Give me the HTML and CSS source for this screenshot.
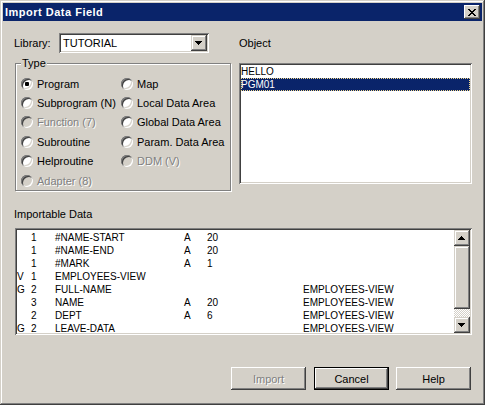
FILE: index.html
```html
<!DOCTYPE html>
<html>
<head>
<meta charset="utf-8">
<title>Import Data Field</title>
<link rel="stylesheet" href="styles.css">
</head>
<body>
<div class="window">
  <div class="titlebar">
    <span class="title">Import Data Field</span>
    <span class="close-btn raised">
      <svg width="8" height="7" viewBox="0 0 8 7"><path d="M0 0h2v1H0zM6 0h2v1H6zM1 1h2v1H1zM5 1h2v1H5zM2 2h4v1H2zM3 3h2v1H3zM2 4h4v1H2zM1 5h2v1H1zM5 5h2v1H5zM0 6h2v1H0zM6 6h2v1H6z" fill="#000"/></svg>
    </span>
  </div>
  <div class="content">
    <div class="top">
      <div class="left">
        <div class="lib-row">
          <span class="lib-label">Library:</span>
          <div class="combo sunken">
            <span class="combo-text">TUTORIAL</span>
            <span class="combo-btn sb-btn">
              <svg width="7" height="4" viewBox="0 0 7 4"><path d="M0 0h7v1H6v1H5v1H4v1H3V3H2V2H1V1H0z" fill="#000"/></svg>
            </span>
          </div>
        </div>
        <div class="group">
          <span class="group-label">Type</span>
          <div class="radios">
            <div class="radio-item"><span class="radio checked"></span>Program</div>
            <div class="radio-item"><span class="radio"></span>Subprogram (N)</div>
            <div class="radio-item disabled"><span class="radio"></span>Function (7)</div>
            <div class="radio-item"><span class="radio"></span>Subroutine</div>
            <div class="radio-item"><span class="radio"></span>Helproutine</div>
            <div class="radio-item disabled"><span class="radio"></span>Adapter (8)</div>
            <div class="radio-item"><span class="radio"></span>Map</div>
            <div class="radio-item"><span class="radio"></span>Local Data Area</div>
            <div class="radio-item"><span class="radio"></span>Global Data Area</div>
            <div class="radio-item"><span class="radio"></span>Param. Data Area</div>
            <div class="radio-item disabled"><span class="radio"></span>DDM (V)</div>
          </div>
        </div>
      </div>
      <div class="right">
        <div class="obj-label">Object</div>
        <div class="listbox obj-list sunken">
          <div class="obj-item">HELLO</div>
          <div class="obj-item selected">PGM01</div>
        </div>
      </div>
    </div>
    <div class="section-label">Importable Data</div>
    <div class="listbox data-list sunken">
      <div class="rows">
        <div class="row"><span class="c-pre"></span><span>1</span><span>#NAME-START</span><span>A</span><span>20</span><span></span></div>
        <div class="row"><span class="c-pre"></span><span>1</span><span>#NAME-END</span><span>A</span><span>20</span><span></span></div>
        <div class="row"><span class="c-pre"></span><span>1</span><span>#MARK</span><span>A</span><span>1</span><span></span></div>
        <div class="row"><span class="c-pre">V</span><span>1</span><span>EMPLOYEES-VIEW</span><span></span><span></span><span></span></div>
        <div class="row"><span class="c-pre">G</span><span>2</span><span>FULL-NAME</span><span></span><span></span><span>EMPLOYEES-VIEW</span></div>
        <div class="row"><span class="c-pre"></span><span>3</span><span>NAME</span><span>A</span><span>20</span><span>EMPLOYEES-VIEW</span></div>
        <div class="row"><span class="c-pre"></span><span>2</span><span>DEPT</span><span>A</span><span>6</span><span>EMPLOYEES-VIEW</span></div>
        <div class="row"><span class="c-pre">G</span><span>2</span><span>LEAVE-DATA</span><span></span><span></span><span>EMPLOYEES-VIEW</span></div>
      </div>
      <div class="scrollbar">
        <span class="sb-btn">
          <svg width="7" height="4" viewBox="0 0 7 4"><path d="M3 0h1v1h1v1h1v1h1v1H0V3h1V2h1V1h1z" fill="#000"/></svg>
        </span>
        <span class="sb-thumb"></span>
        <span class="sb-track"></span>
        <span class="sb-btn">
          <svg width="7" height="4" viewBox="0 0 7 4"><path d="M0 0h7v1H6v1H5v1H4v1H3V3H2V2H1V1H0z" fill="#000"/></svg>
        </span>
      </div>
    </div>
    <div class="buttons">
      <button class="btn disabled btn-import">Import</button>
      <button class="btn default">Cancel</button>
      <button class="btn">Help</button>
    </div>
  </div>
</div>
</body>
</html>
```

FILE: styles.css
```css
* { box-sizing: border-box; }

html, body {
  margin: 0;
  padding: 0;
  background: #d4d0c8;
}

body {
  font-family: "Liberation Sans", Arial, sans-serif;
  font-size: 11px;
  color: #000;
}

.window {
  width: 485px;
  height: 405px;
  padding: 3px;
  background: #d4d0c8;
  box-shadow: inset -1px -1px 0 #404040, inset 1px 1px 0 #d4d0c8,
              inset -2px -2px 0 #808080, inset 2px 2px 0 #fff;
}

.titlebar {
  height: 18px;
  background: #0a246a;
  display: flex;
  align-items: center;
  justify-content: space-between;
  padding: 0 2px 0 2px;
}

.title {
  color: #fff;
  font-weight: bold;
  font-size: 11px;
  letter-spacing: 0.5px;
  line-height: 18px;
}

.raised {
  background: #d4d0c8;
  box-shadow: inset -1px -1px 0 #404040, inset 1px 1px 0 #fff,
              inset -2px -2px 0 #808080, inset 2px 2px 0 #d4d0c8;
}

.close-btn {
  width: 16px;
  height: 14px;
  display: flex;
  align-items: center;
  justify-content: center;
  padding-right: 1px;
}

.sunken {
  background: #fff;
  box-shadow: inset 1px 1px 0 #808080, inset -1px -1px 0 #fff,
              inset 2px 2px 0 #404040, inset -2px -2px 0 #d4d0c8;
}

.content {
  padding: 12px 10px 0 11px;
}

.top {
  display: flex;
  gap: 7px;
}

.left { width: 218px; }
.right { width: 233px; }

.lib-row {
  height: 20px;
  display: flex;
  align-items: center;
}

.lib-label { width: 45px; }

.combo {
  width: 150px;
  height: 20px;
  padding: 2px;
  display: flex;
}

.combo-text {
  flex: 1;
  padding-left: 2px;
  line-height: 16px;
}

.sb-btn {
  width: 16px;
  height: 16px;
  display: flex;
  align-items: center;
  justify-content: center;
  padding: 0 1px 1px 0;
  background: #d4d0c8;
  box-shadow: inset -1px -1px 0 #404040, inset 1px 1px 0 #d4d0c8,
              inset -2px -2px 0 #808080, inset 2px 2px 0 #fff;
}

.group {
  position: relative;
  margin: 10px 0 0 1px;
  width: 216px;
  height: 128px;
  border: 1px solid #808080;
  box-shadow: inset 1px 1px 0 #fff, 1px 1px 0 #fff;
  padding: 10px 0 0 5px;
}

.group-label {
  position: absolute;
  top: -7px;
  left: 5px;
  line-height: 13px;
  padding: 0 1px;
  background: #d4d0c8;
}

.radios {
  display: grid;
  grid-template-columns: 100px auto;
  grid-template-rows: repeat(6, 19.4px);
  grid-auto-flow: column;
}

.radio-item {
  display: flex;
  align-items: center;
  gap: 4px;
  white-space: nowrap;
}

.radio {
  width: 12px;
  height: 12px;
  border-radius: 50%;
  background: #fff;
  box-shadow: inset 1px 1px 0 #808080, inset -1px -1px 0 #fff,
              inset 2px 2px 0 #404040, inset -2px -2px 0 #d4d0c8;
  display: flex;
  align-items: center;
  justify-content: center;
  flex: none;
}

.radio.checked::after {
  content: "";
  width: 4px;
  height: 4px;
  border-radius: 1px;
  background: #000;
}

.disabled {
  color: #808080;
  text-shadow: 1px 1px 0 #fff;
}

.disabled .radio { background: #d4d0c8; }

.obj-label {
  height: 20px;
  line-height: 20px;
}

.listbox {
  padding: 2px;
  font-size: 10px;
}

.obj-list {
  margin-top: 10px;
  height: 121px;
}

.obj-item {
  height: 13px;
  line-height: 13px;
}

.obj-item.selected {
  background: #0a246a;
  color: #fff;
  outline: 1px dotted #f2d88a;
  outline-offset: -1px;
}

.section-label {
  margin-top: 17px;
  line-height: 13px;
  margin-bottom: 7px;
}

.data-list {
  margin-left: 1px;
  width: 457px;
  height: 107px;
  display: flex;
}

.rows {
  flex: 1;
  overflow: hidden;
  padding-top: 1px;
}

.row {
  display: grid;
  grid-template-columns: 14px 24px 129px 23px 96px 1fr;
  height: 13px;
  line-height: 13px;
  white-space: nowrap;
}

.c-pre { text-indent: 0; }

.scrollbar {
  width: 16px;
  display: flex;
  flex-direction: column;
}

.sb-thumb {
  height: 63px;
  background: #d4d0c8;
  box-shadow: inset -1px -1px 0 #404040, inset 1px 1px 0 #d4d0c8,
              inset -2px -2px 0 #808080, inset 2px 2px 0 #fff;
}

.sb-track {
  flex: 1;
  background: repeating-conic-gradient(#fff 0 25%, #d4d0c8 0 50%) 0 0 / 2px 2px;
}

.buttons {
  margin-top: 32px;
  padding-right: 1px;
  display: flex;
  justify-content: flex-end;
  gap: 7px;
}

.btn {
  width: 75px;
  height: 23px;
  margin: 0;
  padding: 0;
  border: 0;
  font-family: "Liberation Sans", Arial, sans-serif;
  font-size: 11px;
  color: #000;
  background: #d4d0c8;
  box-shadow: inset -1px -1px 0 #404040, inset 1px 1px 0 #fff,
              inset -2px -2px 0 #808080, inset 2px 2px 0 #d4d0c8;
}

.btn.disabled { color: #808080; text-shadow: 1px 1px 0 #fff; }

.btn-import { margin-right: 1px; }

.btn.default {
  border: 1px solid #000;
  box-shadow: inset -1px -1px 0 #404040, inset 1px 1px 0 #fff,
              inset -2px -2px 0 #808080;
}
```
